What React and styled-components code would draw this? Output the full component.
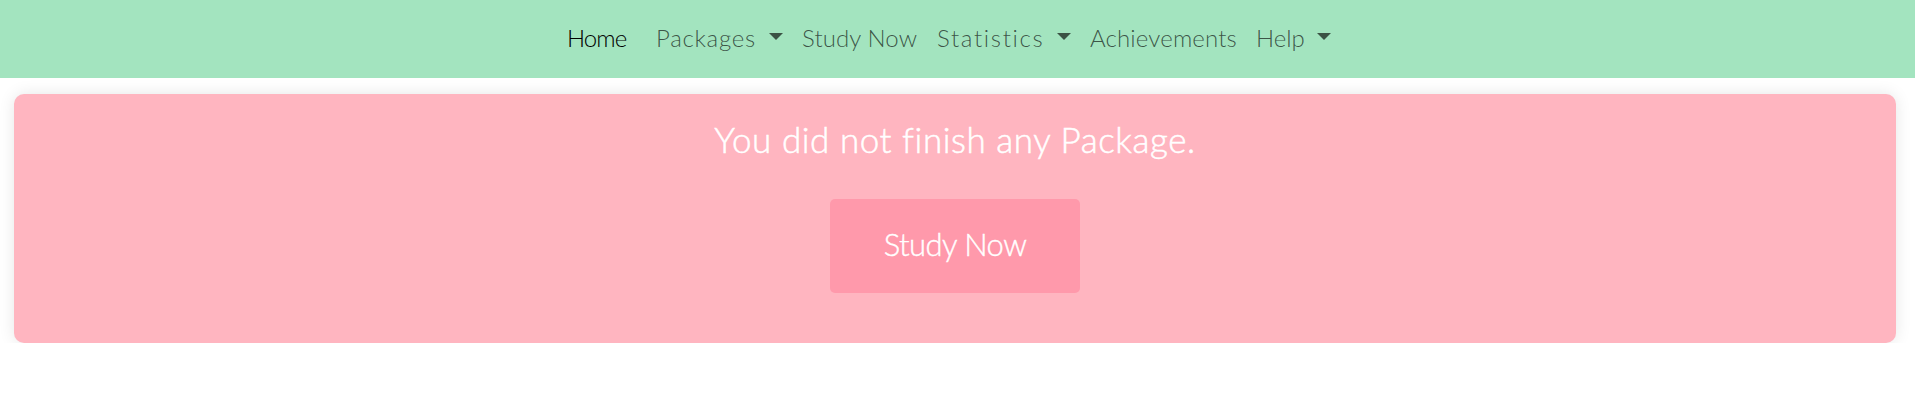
import React from "react";
import styled, { createGlobalStyle } from "styled-components";

const GlobalStyle = createGlobalStyle`
  *, *::before, *::after { box-sizing: border-box; }
  body {
    margin: 0;
    background: #fff;
    font-family: Lato, "Open Sans", sans-serif;
    font-weight: 300;
    font-variant-ligatures: none;
    overflow: hidden;
  }
`;

const Navbar = styled.nav`
  display: flex;
  height: 78px;
  padding: 18px 0 0 567px;
  background: #a3e4bf;
`;

const NavLink = styled.a`
  display: flex;
  flex: none;
  width: ${(p) => p.$width}px;
  height: 40px;
  font-size: 24px;
  line-height: 39px;
  letter-spacing: ${(p) => p.$tracking || 0}px;
  white-space: nowrap;
  text-decoration: none;
  color: ${(p) => (p.$active ? "#000" : "rgba(0, 0, 0, 0.65)")};
`;

const Label = styled.span`
  flex: none;
  width: ${(p) => (p.$width ? `${p.$width}px` : "auto")};
`;

const Caret = styled.span`
  width: 0;
  height: 0;
  margin-top: 15px;
  border-top: 7px solid #3b5345;
  border-left: 7px solid transparent;
  border-right: 7px solid transparent;
`;

const Card = styled.main`
  display: flex;
  flex-direction: column;
  align-items: center;
  height: 249px;
  margin: 16px 19px 0 14px;
  padding-top: 21px;
  border-radius: 10px;
  background: #ffb5c0;
  box-shadow: 0 0 16px rgba(0, 0, 0, 0.1);
`;

const Message = styled.h1`
  margin: 0 0 36px;
  font-size: 35px;
  font-weight: 300;
  line-height: 48px;
  letter-spacing: 0.55px;
  white-space: nowrap;
  color: #fff;
  -webkit-text-stroke: 0.5px #fff;
`;

const StudyButton = styled.button`
  width: 250px;
  height: 94px;
  padding: 0 0 4px;
  border: 0;
  border-radius: 5px;
  background: #ff99ab;
  color: #fff;
  font: inherit;
  font-size: 31px;
  letter-spacing: -0.55px;
  -webkit-text-stroke: 0.4px #fff;
`;

const links = [
  { label: "Home", width: 89, active: true, tracking: -0.9 },
  { label: "Packages", width: 146, caretAt: 113, tracking: 0.7 },
  { label: "Study Now", width: 135, tracking: 0.1 },
  { label: "Statistics", width: 153, caretAt: 120, tracking: 1.65 },
  { label: "Achievements", width: 166, tracking: 0.15 },
  { label: "Help", width: 78, caretAt: 61 },
];

export default function App() {
  return (
    <>
      <GlobalStyle />
      <Navbar>
        {links.map((l) => (
          <NavLink key={l.label} $width={l.width} $active={l.active} $tracking={l.tracking}>
            <Label $width={l.caretAt}>{l.label}</Label>
            {l.caretAt && <Caret />}
          </NavLink>
        ))}
      </Navbar>
      <Card>
        <Message>You did not finish any Package.</Message>
        <StudyButton>Study Now</StudyButton>
      </Card>
    </>
  );
}
